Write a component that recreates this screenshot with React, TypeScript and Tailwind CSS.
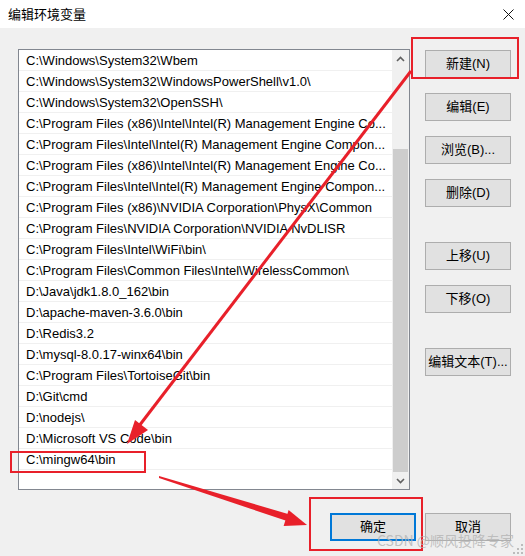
import React from 'react';

const paths = [
  'C:\\Windows\\System32\\Wbem',
  'C:\\Windows\\System32\\WindowsPowerShell\\v1.0\\',
  'C:\\Windows\\System32\\OpenSSH\\',
  'C:\\Program Files (x86)\\Intel\\Intel(R) Management Engine Co...',
  'C:\\Program Files\\Intel\\Intel(R) Management Engine Compon...',
  'C:\\Program Files (x86)\\Intel\\Intel(R) Management Engine Co...',
  'C:\\Program Files\\Intel\\Intel(R) Management Engine Compon...',
  'C:\\Program Files (x86)\\NVIDIA Corporation\\PhysX\\Common',
  'C:\\Program Files\\NVIDIA Corporation\\NVIDIA NvDLISR',
  'C:\\Program Files\\Intel\\WiFi\\bin\\',
  'C:\\Program Files\\Common Files\\Intel\\WirelessCommon\\',
  'D:\\Java\\jdk1.8.0_162\\bin',
  'D:\\apache-maven-3.6.0\\bin',
  'D:\\Redis3.2',
  'D:\\mysql-8.0.17-winx64\\bin',
  'C:\\Program Files\\TortoiseGit\\bin',
  'D:\\Git\\cmd',
  'D:\\nodejs\\',
  'D:\\Microsoft VS Code\\bin',
  'C:\\mingw64\\bin',
];

const uiFont = "font-['Liberation_Sans','Noto_Sans_CJK_SC',sans-serif]";

function WinButton({ label, focused }: { label: string; focused?: boolean }) {
  return (
    <div
      className={`w-[86px] h-[28px] flex items-center justify-center bg-[#e1e1e1] text-[13px] text-black ${
        focused ? 'border-2 border-[#0078d7]' : 'border border-[#adadad]'
      }`}
    >
      {label}
    </div>
  );
}

function App() {
  return (
    <div className={`relative w-[525px] h-[556px] overflow-hidden bg-[#f0f0f0] ${uiFont}`}>
      {/* Title bar */}
      <div className="h-[28px] bg-white flex items-center justify-between pl-[8px] pr-[11px]">
        <span className="text-[13px] text-black font-['Noto_Sans_CJK_SC',sans-serif]">编辑环境变量</span>
        <svg width="11" height="11" viewBox="0 0 11 11">
          <path d="M0.5 0.5 L10.5 10.5 M10.5 0.5 L0.5 10.5" stroke="#111" strokeWidth="1" />
        </svg>
      </div>

      {/* Body */}
      <div className="flex pl-[18px] pt-[21px]">
        {/* Path list */}
        <div className="w-[392px] h-[441px] border border-[#828790] bg-white flex">
          <div className="flex-1 flex flex-col">
            {paths.map((p, i) => (
              <div
                key={i}
                className="h-[21px] shrink-0 flex items-center pl-[7px] pt-[2px] border-b border-[#f0f0f0] text-[13px] text-black whitespace-nowrap overflow-hidden"
              >
                {p}
              </div>
            ))}
          </div>
          {/* Scrollbar */}
          <div className="w-[17px] flex flex-col bg-[#f0f0f0]">
            <div className="h-[17px] flex items-center justify-center">
              <svg width="9" height="6" viewBox="0 0 9 6">
                <path d="M1 5 L4.5 1.5 L8 5" fill="none" stroke="#606060" strokeWidth="1.6" />
              </svg>
            </div>
            <div className="h-[82px]" />
            <div className="mx-[1px] h-[323px] bg-[#cdcdcd]" />
            <div className="flex-1" />
            <div className="h-[17px] flex items-center justify-center">
              <svg width="9" height="6" viewBox="0 0 9 6">
                <path d="M1 1 L4.5 4.5 L8 1" fill="none" stroke="#606060" strokeWidth="1.6" />
              </svg>
            </div>
          </div>
        </div>

        {/* Right buttons */}
        <div className="ml-[15px] mt-[1px] flex flex-col">
          <WinButton label="新建(N)" />
          <div className="h-[15px]" />
          <WinButton label="编辑(E)" />
          <div className="h-[15px]" />
          <WinButton label="浏览(B)..." />
          <div className="h-[15px]" />
          <WinButton label="删除(D)" />
          <div className="h-[35px]" />
          <WinButton label="上移(U)" />
          <div className="h-[15px]" />
          <WinButton label="下移(O)" />
          <div className="h-[35px]" />
          <WinButton label="编辑文本(T)..." />
        </div>
      </div>

      {/* Bottom buttons */}
      <div className="flex justify-end gap-[9px] pr-[14px] mt-[23px]">
        <WinButton label="确定" focused />
        <WinButton label="取消" />
      </div>

      {/* Annotation overlays */}
      <div className="absolute left-[411px] top-[37px] w-[108px] h-[42px] border-2 border-[#e8202a]" />
      <div className="absolute left-[10px] top-[451px] w-[136px] h-[22px] border-2 border-[#e8202a]" />
      <div className="absolute left-[309px] top-[497px] w-[114px] h-[54px] border-2 border-[#e8202a]" />

      <svg className="absolute left-0 top-0 pointer-events-none" width="525" height="556" viewBox="0 0 525 556">
        <line x1="411" y1="71" x2="139" y2="426" stroke="#e8202a" strokeWidth="3" />
        <polygon points="127,444 148,430 135,420" fill="#e8202a" />
        <polygon points="159,476 288,514 287,521 159,478" fill="#e8202a" />
        <polygon points="307,525 288.6,510 283.6,526" fill="#e8202a" />
      </svg>

      {/* Watermark */}
      <div className="absolute left-[377px] top-[530px] text-[14px] leading-[20px] text-[#b4b4b4]/80 whitespace-nowrap font-['Noto_Sans_CJK_SC',sans-serif]">
        CSDN @顺风投降专家
      </div>

      {/* Resize grip */}
      <svg className="absolute right-[2px] bottom-[2px]" width="10" height="10" viewBox="0 0 10 10">
        <rect x="8" y="0" width="2" height="2" fill="#bcbcbc" />
        <rect x="4" y="4" width="2" height="2" fill="#bcbcbc" />
        <rect x="8" y="4" width="2" height="2" fill="#bcbcbc" />
        <rect x="0" y="8" width="2" height="2" fill="#bcbcbc" />
        <rect x="4" y="8" width="2" height="2" fill="#bcbcbc" />
        <rect x="8" y="8" width="2" height="2" fill="#bcbcbc" />
      </svg>
    </div>
  );
}

export default App;
